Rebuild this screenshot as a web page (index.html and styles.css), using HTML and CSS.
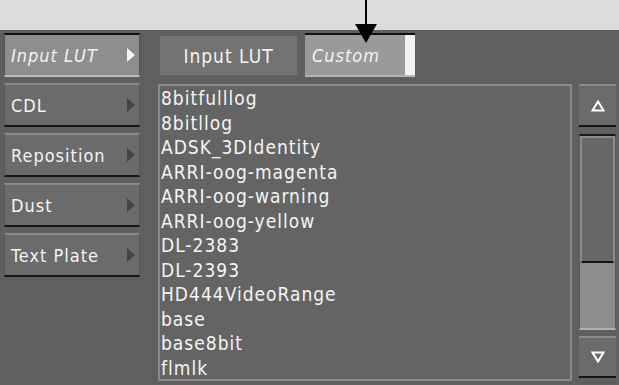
FILE: index.html
```html
<!DOCTYPE html>
<html lang="en">
<head>
  <meta charset="UTF-8" />
  <title>Input LUT</title>
  <link rel="stylesheet" href="styles.css">
</head>
<body>
  <div class="topbar"></div>

  <!-- callout arrow pointing at the Custom field -->
  <svg class="pointer" width="24" height="44" viewBox="0 0 24 44">
    <rect x="10" y="0" width="2" height="26" fill="#000"/>
    <polygon points="0,24 22,24 11,43" fill="#000"/>
  </svg>

  <div class="panel">
    <div class="menu">
      <div class="menu-btn active"><span>Input LUT</span><i class="tri"></i></div>
      <div class="menu-btn"><span>CDL</span><i class="tri"></i></div>
      <div class="menu-btn"><span>Reposition</span><i class="tri"></i></div>
      <div class="menu-btn"><span>Dust</span><i class="tri"></i></div>
      <div class="menu-btn"><span>Text Plate</span><i class="tri"></i></div>
    </div>

    <div class="main">
      <div class="head">
        <div class="label">Input LUT</div>
        <div class="field"><span>Custom</span><i class="field-end"></i></div>
      </div>

      <div class="browser">
        <ul class="list">
          <li>8bitfulllog</li>
          <li>8bitllog</li>
          <li>ADSK_3DIdentity</li>
          <li>ARRI-oog-magenta</li>
          <li>ARRI-oog-warning</li>
          <li>ARRI-oog-yellow</li>
          <li>DL-2383</li>
          <li>DL-2393</li>
          <li>HD444VideoRange</li>
          <li>base</li>
          <li>base8bit</li>
          <li>flmlk</li>
        </ul>

        <div class="scroll">
          <div class="scroll-btn">
            <svg width="14" height="12" viewBox="0 0 14 12"><polygon points="7,1.5 12.5,10.5 1.5,10.5" fill="none" stroke="#fff" stroke-width="2"/></svg>
          </div>
          <div class="track">
            <div class="thumb"></div>
          </div>
          <div class="scroll-btn">
            <svg width="14" height="12" viewBox="0 0 14 12"><polygon points="1.5,1.5 12.5,1.5 7,10.5" fill="none" stroke="#fff" stroke-width="2"/></svg>
          </div>
        </div>
      </div>
    </div>
  </div>
</body>
</html>
```

FILE: styles.css
```css
body {
  margin: 0;
  width: 619px;
  height: 385px;
  overflow: hidden;
  background-color: #5f5f5f;
  font-family: 'DejaVu Sans Condensed', 'DejaVu Sans', sans-serif;
  color: #f4f4f4;
  letter-spacing: 1px;
  position: relative;
}

.topbar {
  height: 30px;
  background-color: #dcdcdc;
}

.pointer {
  position: absolute;
  left: 355px;
  top: 0;
}

.panel {
  display: flex;
  gap: 18px;
  padding: 3px 0 0 4px;
}

/* left menu */
.menu {
  width: 136px;
  display: flex;
  flex-direction: column;
  gap: 6px;
}

.menu-btn {
  box-sizing: border-box;
  height: 44px;
  display: flex;
  align-items: center;
  justify-content: space-between;
  padding: 0 4px 0 6px;
  background-color: #6b6b6b;
  border-top: 2px solid #8a8a8a;
  border-bottom: 2px solid #161616;
  border-left: 1px solid #575757;
  border-right: 1px solid #575757;
  font-size: 18px;
}

.menu-btn .tri {
  width: 0;
  height: 0;
  border-top: 7px solid transparent;
  border-bottom: 7px solid transparent;
  border-left: 8px solid #444;
}

.menu-btn.active {
  background-color: #8e8e8e;
  border-top-color: #111;
  border-bottom-color: #bdbdbd;
  font-style: italic;
}

.menu-btn.active .tri {
  border-left-color: #f4f4f4;
}

/* right side */
.main {
  width: 458px;
}

.head {
  display: flex;
  align-items: flex-start;
  gap: 8px;
  height: 44px;
  padding-left: 2px;
}

.label {
  width: 137px;
  height: 39px;
  margin-top: 3px;
  background-color: #737373;
  display: flex;
  align-items: center;
  justify-content: center;
  font-size: 19px;
}

.field {
  box-sizing: border-box;
  width: 110px;
  height: 44px;
  display: flex;
  align-items: center;
  justify-content: space-between;
  background-color: #9a9a9a;
  border-top: 2px solid #111;
  border-bottom: 2px solid #b5b5b5;
  padding-left: 7px;
  font-size: 18px;
  font-style: italic;
}

.field-end {
  width: 10px;
  align-self: stretch;
  background-color: #f2f2f2;
}

.browser {
  display: flex;
  gap: 7px;
  margin-top: 7px;
  height: 294px;
}

.list {
  box-sizing: border-box;
  width: 414px;
  height: 297px;
  margin: 0;
  padding: 0 0 0 1px;
  list-style: none;
  background-color: #646464;
  border: 2px solid #8a8a8a;
  overflow: hidden;
}

.list li {
  height: 24.5px;
  line-height: 24px;
  font-size: 19px;
  white-space: nowrap;
}

/* scrollbar */
.scroll {
  width: 37px;
  display: flex;
  flex-direction: column;
  gap: 7px;
}

.scroll-btn {
  box-sizing: border-box;
  height: 43px;
  display: flex;
  align-items: center;
  justify-content: center;
  background-color: #6b6b6b;
  border-top: 2px solid #8a8a8a;
  border-bottom: 2px solid #161616;
  flex-shrink: 0;
}

.scroll-btn:last-child {
  margin-top: -1px;
  height: 42px;
}

.track {
  box-sizing: border-box;
  height: 196px;
  background-color: #8c8c8c;
  border-top: 2px solid #1a1a1a;
  border-bottom: 2px solid #b0b0b0;
  border-left: 1px solid #5a5a5a;
  border-right: 1px solid #5a5a5a;
  padding: 1px 1px 0 1px;
  flex-shrink: 0;
}

.thumb {
  box-sizing: border-box;
  height: 126px;
  background-color: #676767;
  border: 1px solid #8a8a8a;
  border-bottom: 2px solid #161616;
}
```
